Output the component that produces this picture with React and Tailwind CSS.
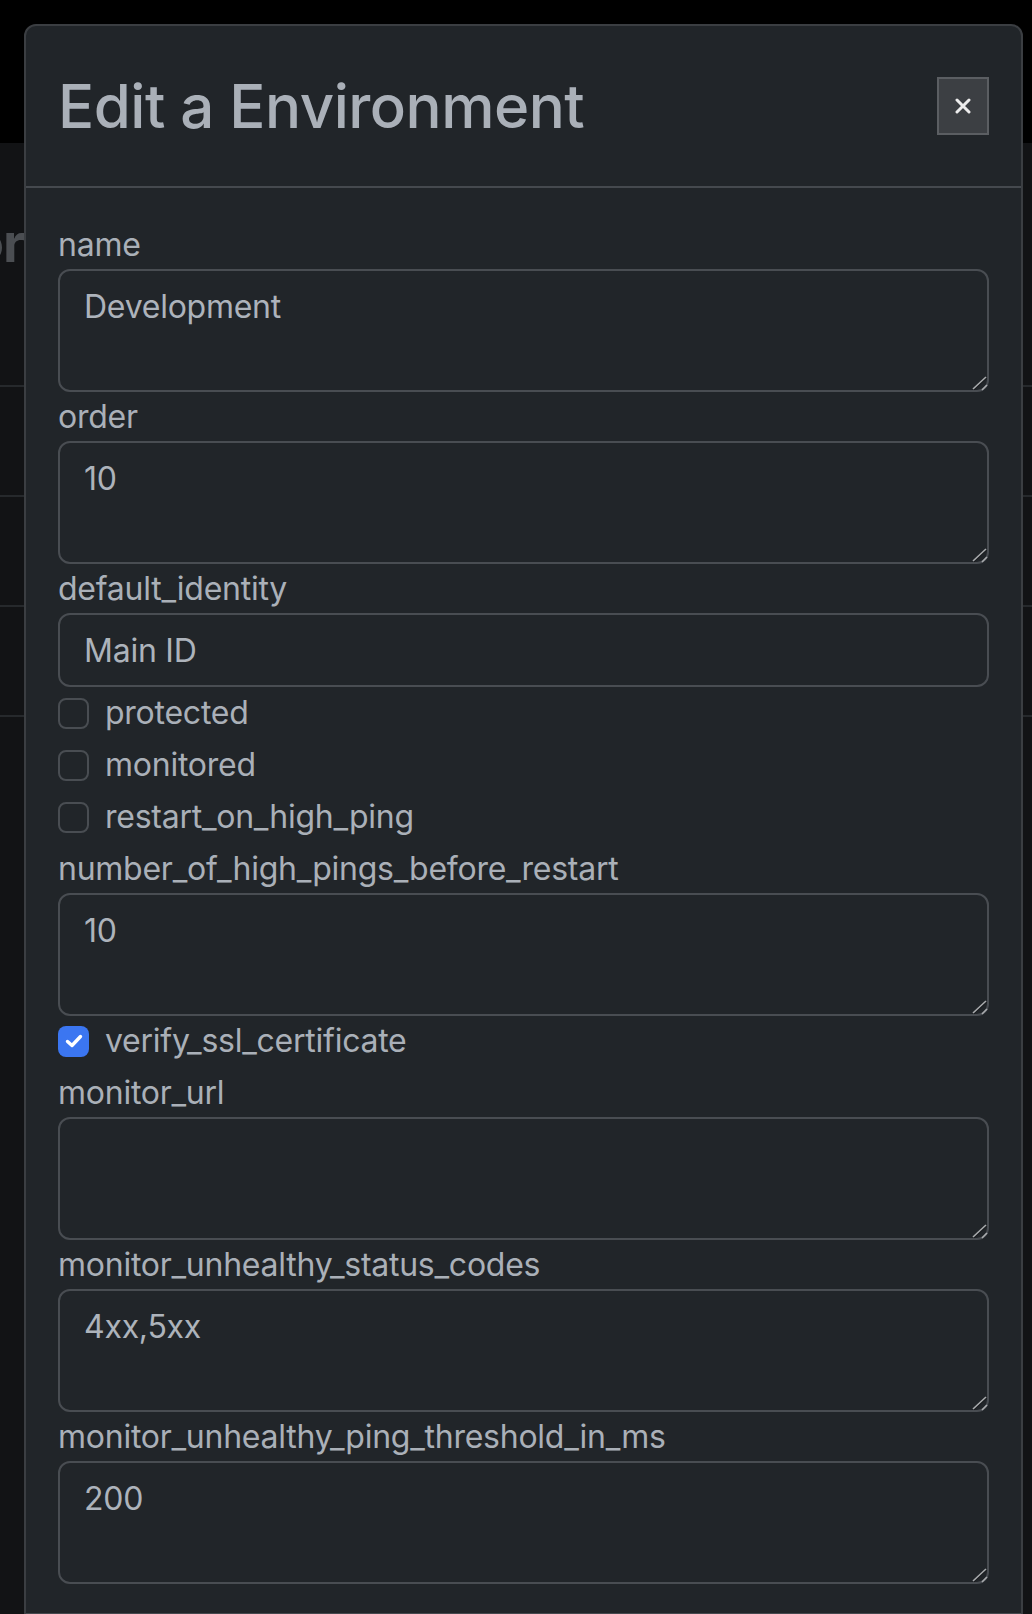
import React from 'react';

const font = { fontFamily: 'Inter, "Noto Sans", sans-serif' };

// one label + textarea pair
function AreaField({ label, value }) {
  return (
    <div className="mb-[1px]">
      <label className="block text-[32px] leading-[48px] tracking-[-0.25px] text-[#aab0b8]">{label}</label>
      <div className="relative">
        <textarea
          readOnly
          defaultValue={value}
          className="block w-full h-[123px] resize-none rounded-[12px] border-2 border-[#494d52] bg-[#212529] px-[24px] py-[12px] text-[32px] leading-[48px] tracking-[-0.25px] text-[#adb3bb] outline-none"
          style={font}
        />
        {/* resize grip */}
        <svg className="absolute right-0 bottom-0" width="18" height="18" viewBox="0 0 18 18" fill="none">
          <path d="M2 15 L15 3" stroke="#a9abad" strokeWidth="1.6" />
          <path d="M11 16 L16 11" stroke="#a9abad" strokeWidth="1.6" />
          <path d="M3 16 L16 4" stroke="#1a1c1f" strokeWidth="1" />
        </svg>
      </div>
    </div>
  );
}

function CheckRow({ label, checked }) {
  return (
    <div className="flex items-center h-[48px] mb-[4px]">
      {checked ? (
        <div className="w-[31px] h-[31px] rounded-[8px] bg-[#3b76f1] flex items-center justify-center">
          <svg width="18" height="14" viewBox="0 0 18 14" fill="none">
            <path d="M2.5 7.5 L7 11.5 L15.5 2.5" stroke="white" strokeWidth="3.4" strokeLinecap="round" strokeLinejoin="round" />
          </svg>
        </div>
      ) : (
        <div className="w-[31px] h-[31px] rounded-[8px] border-2 border-[#494d52] bg-[#212529]" />
      )}
      <span className="ml-[16px] text-[32px] leading-[48px] tracking-[-0.25px] text-[#aab0b8]">{label}</span>
    </div>
  );
}

export default function App() {
  return (
    <div className="relative w-[1032px] h-[1614px] overflow-hidden bg-[#121315]" style={font}>
      {/* page behind the backdrop */}
      <div className="h-[143px] bg-black" />
      <div className="flex h-[200px] items-center">
        <div className="w-[24px] overflow-hidden flex justify-end">
          <span className="text-[54px] font-bold text-[#4b4e52] whitespace-nowrap leading-none tracking-[-1px]">Monitor</span>
        </div>
      </div>
      <div className="h-[44px] border-b-2 border-[#26292c]" />
      <div className="h-[110px] border-b-2 border-[#26292c]" />
      <div className="h-[110px] border-b-2 border-[#26292c]" />
      <div className="h-[110px] border-b-2 border-[#26292c]" />

      {/* modal */}
      <div className="absolute left-[24px] top-[24px] w-[999px] rounded-[12px] border-2 border-[#3b3e42] bg-[#212529]">
        <div className="flex h-[162px] items-center justify-between border-b-2 border-[#45494e] px-[32px]">
          <h1 className="text-[60px] font-medium leading-[72px] text-[#aab0b8] tracking-[-0.5px]">Edit a Environment</h1>
          <button className="flex h-[58px] w-[52px] items-center justify-center border-2 border-[#5b5e62] bg-[#3c3f43]">
            <svg width="16" height="16" viewBox="0 0 16 16" fill="none">
              <path d="M2 2 L14 14 M14 2 L2 14" stroke="#ececec" strokeWidth="3" strokeLinecap="round" />
            </svg>
          </button>
        </div>

        <div className="px-[32px] pt-[33px] pb-[28px]">
          <AreaField label="name" value="Development" />
          <AreaField label="order" value="10" />
          <div className="mb-[2px]">
            <label className="block text-[32px] leading-[48px] tracking-[-0.25px] text-[#aab0b8]">default_identity</label>
            <input
              readOnly
              defaultValue="Main ID"
              className="block w-full h-[74px] rounded-[12px] border-2 border-[#494d52] bg-[#212529] px-[24px] text-[32px] leading-[48px] tracking-[-0.25px] text-[#adb3bb] outline-none"
              style={font}
            />
          </div>
          <CheckRow label="protected" />
          <CheckRow label="monitored" />
          <CheckRow label="restart_on_high_ping" />
          <AreaField label="number_of_high_pings_before_restart" value="10" />
          <CheckRow label="verify_ssl_certificate" checked />
          <AreaField label="monitor_url" value="" />
          <AreaField label="monitor_unhealthy_status_codes" value="4xx,5xx" />
          <AreaField label="monitor_unhealthy_ping_threshold_in_ms" value="200" />
        </div>
        <div className="h-[40px] border-t-2 border-[#45494e]" />
      </div>
    </div>
  );
}
